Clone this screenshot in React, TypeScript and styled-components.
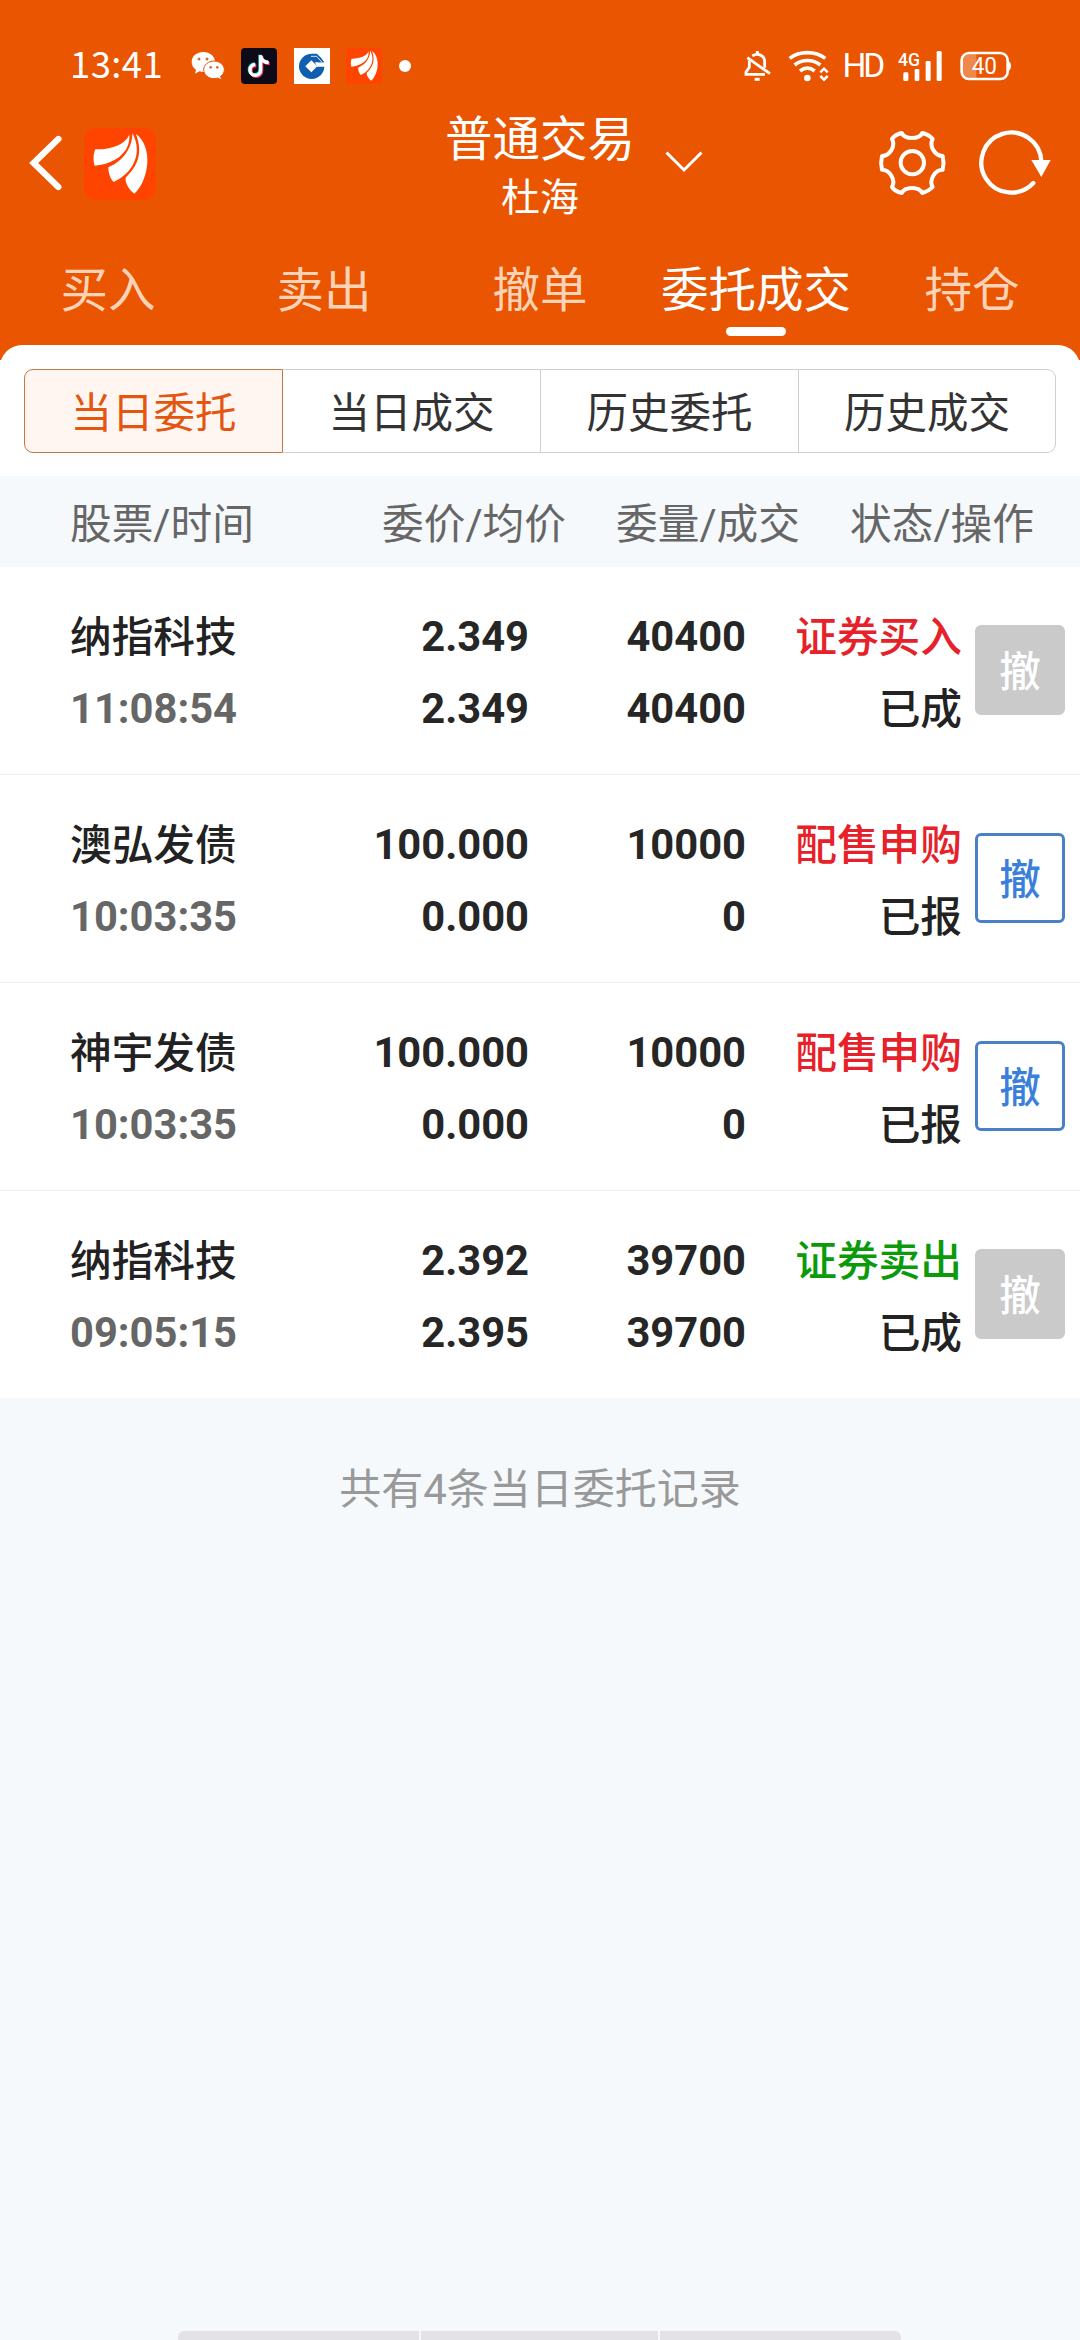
import React from "react";
import styled, { createGlobalStyle } from "styled-components";

const ORANGE = "#e95500";

const GlobalStyle = createGlobalStyle`
  * { box-sizing: border-box; }
  body {
    margin: 0;
    background: #f5f9fc;
    font-family: Roboto, "Noto Sans CJK SC", sans-serif;
  }
`;

const Screen = styled.div`
  width: 1080px;
  height: 2340px;
  display: flex;
  flex-direction: column;
  overflow: hidden;
  background: #f5f9fc;
`;

const StatusBar = styled.div`
  height: 100px;
  padding: 32px 69px 0 70px;
  display: flex;
  align-items: center;
  justify-content: space-between;
  background: ${ORANGE};
  color: #fff;
`;

const StatusGroup = styled.div<{ $gap: number }>`
  display: flex;
  align-items: center;
  gap: ${(p) => p.$gap}px;
`;

const Clock = styled.span`
  width: 104px;
  height: 46px;
  font-family: "Noto Sans CJK SC", sans-serif;
  font-weight: 400;
  font-size: 36.5px;
  line-height: 40px;
  letter-spacing: 0.4px;
`;

const AppTile = styled.div<{ $bg: string; $radius: number; $size?: number }>`
  width: ${(p) => p.$size || 36}px;
  height: ${(p) => p.$size || 36}px;
  background: ${(p) => p.$bg};
  border-radius: ${(p) => p.$radius}px;
  display: flex;
`;

const Dot = styled.span`
  width: 12px;
  height: 12px;
  border-radius: 50%;
  background: #fff;
`;

const HdLabel = styled.span`
  width: 37.6px;
  margin-left: -5px;
  font-family: Roboto, sans-serif;
  font-size: 33.5px;
  line-height: 40px;
  letter-spacing: -3px;
`;

const TitleBar = styled.header`
  height: 140px;
  display: grid;
  grid-template-columns: 360px 360px 360px;
  background: ${ORANGE};
  color: #fff;
`;

const TitleLeft = styled.div`
  display: flex;
  align-items: flex-start;
  gap: 22px;
  padding: 28px 0 0 28px;
`;

const TitleCenter = styled.div`
  position: relative;
  display: flex;
  flex-direction: column;
  align-items: center;
  padding-top: 12px;
`;

const Title = styled.h1`
  margin: 0;
  font-size: 47.5px;
  font-weight: 400;
  line-height: 56px;
`;

const Subtitle = styled.span`
  font-size: 39px;
  line-height: 60px;
`;

const Caret = styled.svg`
  position: absolute;
  left: 305px;
  top: 50px;
`;

const TitleRight = styled.div`
  display: flex;
  align-items: flex-start;
  justify-content: flex-end;
  gap: 32px;
  padding: 28px 29px 0 0;
`;

const Tabs = styled.nav`
  height: 105px;
  display: grid;
  grid-template-columns: repeat(5, 1fr);
  background: ${ORANGE};
`;

const Tab = styled.div<{ $active?: boolean }>`
  display: flex;
  flex-direction: column;
  align-items: center;
  gap: 6px;
  padding-top: 21px;
  font-size: 47.5px;
  line-height: 60px;
  white-space: nowrap;
  color: ${(p) => (p.$active ? "#fff" : "#fdd3b8")};
`;

const TabMark = styled.span`
  width: 60px;
  height: 9px;
  border-radius: 5px;
  background: #fff;
`;

const PanelEdge = styled.div`
  height: 15px;
  overflow: hidden;
  background: ${ORANGE};
`;

const PanelEdgeFill = styled.div`
  height: 40px;
  border-radius: 22px 22px 0 0;
  background: #fff;
`;

const SegmentWrap = styled.div`
  height: 116px;
  padding: 9px 24px 0;
  background: #fff;
`;

const Segments = styled.div`
  display: grid;
  grid-template-columns: 259px 258px 258px 257px;
  height: 84px;
`;

const Segment = styled.div<{ $active?: boolean }>`
  display: flex;
  align-items: center;
  justify-content: center;
  padding-bottom: 2px;
  font-size: 41.5px;
  border: 1px solid ${(p) => (p.$active ? "#c4784a" : "#cfcfcf")};
  border-left-width: ${(p) => (p.$active ? 1 : 0)}px;
  color: ${(p) => (p.$active ? "#e45510" : "#333")};
  background: ${(p) => (p.$active ? "#fff6f2" : "#fff")};
  &:first-child { border-radius: 9px 0 0 9px; }
  &:last-child { border-radius: 0 9px 9px 0; }
`;

const ColumnHead = styled.div`
  height: 91px;
  display: grid;
  grid-template-columns: 300px 196px 234px 234px;
  padding: 0 0 2px 70px;
  align-items: center;
  font-size: 41.7px;
  color: #666;
  background: #f5f9fc;
`;

const HeadCell = styled.span<{ $right?: boolean }>`
  text-align: ${(p) => (p.$right ? "right" : "left")};
`;

const Row = styled.div`
  height: 208px;
  display: grid;
  grid-template-columns: 230px 229px 217px 216px 90px;
  padding: 34px 0 0 70px;
  background: #fff;
  border-bottom: 1px solid #ececec;
  &:last-child { border-bottom: 0; height: 207px; }
`;

const Cell = styled.div<{ $right?: boolean }>`
  display: flex;
  flex-direction: column;
  align-items: ${(p) => (p.$right ? "flex-end" : "flex-start")};
`;

const Num = styled.span<{ $color?: string }>`
  font-size: 41.7px;
  line-height: 72px;
  font-weight: 700;
  color: ${(p) => p.$color || "#262626"};
`;

const Label = styled.span<{ $color?: string }>`
  height: 72px;
  padding-top: 1px;
  font-size: 41.7px;
  line-height: 72px;
  font-weight: 500;
  color: ${(p) => p.$color || "#222"};
`;

const CancelButton = styled.button<{ $enabled: boolean }>`
  width: 90px;
  height: 90px;
  margin: 24px 0 0 13px;
  padding: 6px 0 0;
  border-radius: 6px;
  border: 3px solid ${(p) => (p.$enabled ? "#4a80c8" : "#cacaca")};
  background: ${(p) => (p.$enabled ? "#fff" : "#cacaca")};
  color: ${(p) => (p.$enabled ? "#3a7fdc" : "#fff")};
  font-family: inherit;
  font-size: 41.5px;
  font-weight: 500;
  line-height: 78px;
`;

const Summary = styled.p`
  flex: 1;
  margin: 0;
  padding-top: 62px;
  text-align: center;
  font-size: 42px;
  line-height: 60px;
  color: #999;
`;

const HomeBars = styled.div`
  display: grid;
  grid-template-columns: 241px 237px 241px;
  gap: 2px;
  height: 9px;
  padding-left: 178px;
`;

const HomeBar = styled.span<{ $corner?: string }>`
  background: #e3e2e7;
  border-radius: ${(p) => p.$corner || "0"};
`;

const WeChatIcon = () => (
  <svg width="34" height="30" viewBox="420 63 102 90">
    <path d="M457 66c-20 0-35 13-35 30 0 10 5 18 13 23l-3 12 13-7c4 1 8 2 12 2 20 0 35-13 35-30s-15-30-35-30z" fill="#fff" />
    <path d="M489 93c-17 0-31 12-31 26s14 27 31 27c4 0 8-1 11-2l12 6-3-11c7-5 11-12 11-20 0-14-14-26-31-26z" fill="#fff" stroke={ORANGE} strokeWidth="3" />
    <g fill="#c9703f">
      <circle cx="444" cy="87" r="4.5" />
      <circle cx="468" cy="87" r="4.5" />
      <circle cx="479" cy="112" r="4" />
      <circle cx="499" cy="112" r="4" />
    </g>
  </svg>
);

const NOTE = "M632 76v44a16 16 0 1 1-16-16M632 77c2 12 10 20 24 21";

const DouyinIcon = () => (
  <svg width="36" height="36" viewBox="573 54 108 108" fill="none" strokeWidth="10">
    <path d={NOTE} stroke="#25d8d8" transform="translate(-2 -2)" />
    <path d={NOTE} stroke="#f0305a" transform="translate(3 3)" />
    <path d={NOTE} stroke="#fff" />
  </svg>
);

const BankIcon = () => (
  <svg width="36" height="36" viewBox="729 54 108 108">
    <circle cx="782" cy="109" r="38" fill="#0f5fae" />
    <path d="M781 91l18 18-18 18-18-18z" fill="#fff" />
    <path d="M792 97h33v13h-27z" fill="#fff" />
    <path d="M784 71h14l22 26h-18z" fill="#0f5fae" />
    <path d="M780 79h17l16 18" fill="none" stroke="#fff" strokeWidth="2.500" />
  </svg>
);

const EastLogo = ({ size }: { size: number }) => (
  <svg width={size} height={size} viewBox="252 84 216 216" fill="#fff">
    <path d="M388 104C374 134 334 149 286 148C280 160 279 182 284 197C338 192 392 162 388 104Z" />
    <path d="M397 99C398 144 368 184 325 202C325 218 330 236 341 246C394 222 432 164 397 99Z" />
    <path d="M408 102C430 162 412 198 377 233C374 248 388 270 403 281C448 240 460 140 408 102Z" />
  </svg>
);

const BellOffIcon = () => (
  <svg width="27" height="32" viewBox="70 60 81 96" fill="none" stroke="#fff" strokeWidth="8.5">
    <path d="M86 91V112L76 126V133H133" />
    <path d="M80 83L148 131" />
    <path d="M95 78C111 67 132 76 132 95V113" />
    <path d="M110 63V74" strokeWidth="9" />
    <path d="M102 148H117" strokeWidth="9" />
  </svg>
);

const WifiIcon = () => (
  <svg width="42" height="32" viewBox="206 60 126 96" fill="none" stroke="#fff" strokeWidth="11">
    <path d="M211 85C240 62 288 62 318 85" />
    <path d="M226 105C248 87 280 87 303 105" />
    <path d="M242 123C256 112 272 112 286 123" />
    <circle cx="264" cy="144" r="10" fill="#fff" stroke="none" />
    <path d="M303 127L314 116L325 127M303 138L314 149L325 138" strokeWidth="7.5" />
  </svg>
);

const SignalSvg = styled.svg`
  overflow: visible;
`;

const SignalText = styled.text`
  font-family: Roboto, sans-serif;
  font-weight: 500;
  font-size: 57px;
  fill: #fff;
`;

const SignalIcon = () => (
  <SignalSvg width="46" height="42" viewBox="532 45 138 126" fill="#fff">
    <SignalText x="535" y="108" textLength="66" lengthAdjust="spacingAndGlyphs">4G</SignalText>
    <rect x="551" y="127" width="15" height="26" rx="4" />
    <rect x="585" y="117" width="14" height="36" rx="4" />
    <rect x="618" y="93" width="15" height="60" rx="4" />
    <rect x="651" y="63" width="15" height="90" rx="4" />
  </SignalSvg>
);

const BatteryText = styled.text`
  font-family: Roboto, sans-serif;
  font-size: 70px;
  fill: #fff;
`;

const BatteryIcon = () => (
  <svg width="51" height="30" viewBox="721 63 153 90">
    <rect x="726" y="69" width="138" height="78" rx="22" fill="none" stroke="#fff" strokeWidth="8" />
    <path d="M750 73h20v70h-20a20 20 0 0 1-20-20v-30a20 20 0 0 1 20-20z" fill="#fff" opacity=".3" />
    <path d="M866 93q8 3 8 15t-8 15z" fill="#fff" />
    <BatteryText x="756" y="132" textLength="76" lengthAdjust="spacingAndGlyphs">40</BatteryText>
  </svg>
);

const BackIcon = () => (
  <svg width="34" height="72" viewBox="84 84 102 216" fill="none" stroke="#fff" strokeWidth="19" strokeLinecap="round">
    <path d="M175 117L101 189L175 261" />
  </svg>
);

const GearIcon = () => (
  <svg width="70" height="70" viewBox="406 84 210 210" fill="none" stroke="#fff" strokeWidth="12" strokeLinejoin="round">
    <path d="M480 99C490 119 532 119 542 99Q562 104 573 117C561 138 580 168 603 168Q608 188 603 209C580 209 561 240 573 261Q562 273 542 279C532 259 490 259 480 279Q460 274 451 261C463 240 444 209 421 209Q416 188 421 168C444 168 463 138 451 117Q460 104 480 99Z" />
    <circle cx="512" cy="188" r="35" />
  </svg>
);

const RefreshIcon = () => (
  <svg width="72" height="70" viewBox="715 84 216 210">
    <path d="M902 184A90 90 0 1 0 878 249" fill="none" stroke="#fff" strokeWidth="13" strokeLinecap="round" />
    <path d="M872 180H930L902 231Z" fill="#fff" />
  </svg>
);

const tabs = ["买入", "卖出", "撤单", "委托成交", "持仓"];
const segments = ["当日委托", "当日成交", "历史委托", "历史成交"];

const RED = "#e62129";
const GREEN = "#0a9a0a";

const orders = [
  { name: "纳指科技", time: "11:08:54", price: "2.349", avg: "2.349", qty: "40400", filled: "40400", side: "证券买入", color: RED, state: "已成", open: false },
  { name: "澳弘发债", time: "10:03:35", price: "100.000", avg: "0.000", qty: "10000", filled: "0", side: "配售申购", color: RED, state: "已报", open: true },
  { name: "神宇发债", time: "10:03:35", price: "100.000", avg: "0.000", qty: "10000", filled: "0", side: "配售申购", color: RED, state: "已报", open: true },
  { name: "纳指科技", time: "09:05:15", price: "2.392", avg: "2.395", qty: "39700", filled: "39700", side: "证券卖出", color: GREEN, state: "已成", open: false },
];

export default function App() {
  return (
    <Screen>
      <GlobalStyle />
      <StatusBar>
        <StatusGroup $gap={16.5}>
          <Clock>13:41</Clock>
          <WeChatIcon />
          <AppTile $bg="#0d0b18" $radius={4}><DouyinIcon /></AppTile>
          <AppTile $bg="#fff" $radius={0}><BankIcon /></AppTile>
          <AppTile $bg="#ff4400" $radius={4}><EastLogo size={36} /></AppTile>
          <Dot />
        </StatusGroup>
        <StatusGroup $gap={17}>
          <BellOffIcon />
          <WifiIcon />
          <HdLabel>HD</HdLabel>
          <SignalIcon />
          <BatteryIcon />
        </StatusGroup>
      </StatusBar>

      <TitleBar>
        <TitleLeft>
          <BackIcon />
          <AppTile $bg="#ff4400" $radius={12} $size={72}><EastLogo size={72} /></AppTile>
        </TitleLeft>
        <TitleCenter>
          <Title>普通交易</Title>
          <Subtitle>杜海</Subtitle>
          <Caret width="38" height="24" viewBox="0 0 38 24" fill="none" stroke="#fff" strokeWidth="3">
            <path d="M1.500 2.500L19 20L36.500 2.500" />
          </Caret>
        </TitleCenter>
        <TitleRight>
          <GearIcon />
          <RefreshIcon />
        </TitleRight>
      </TitleBar>

      <Tabs>
        {tabs.map((t, i) => (
          <Tab key={t} $active={i === 3}>
            {t}
            {i === 3 && <TabMark />}
          </Tab>
        ))}
      </Tabs>
      <PanelEdge><PanelEdgeFill /></PanelEdge>

      <SegmentWrap>
        <Segments>
          {segments.map((s, i) => (
            <Segment key={s} $active={i === 0}>{s}</Segment>
          ))}
        </Segments>
      </SegmentWrap>

      <ColumnHead>
        <HeadCell>股票/时间</HeadCell>
        <HeadCell $right>委价/均价</HeadCell>
        <HeadCell $right>委量/成交</HeadCell>
        <HeadCell $right>状态/操作</HeadCell>
      </ColumnHead>

      <div>
        {orders.map((o, i) => (
          <Row key={i}>
            <Cell>
              <Label>{o.name}</Label>
              <Num $color="#666">{o.time}</Num>
            </Cell>
            <Cell $right>
              <Num>{o.price}</Num>
              <Num>{o.avg}</Num>
            </Cell>
            <Cell $right>
              <Num>{o.qty}</Num>
              <Num>{o.filled}</Num>
            </Cell>
            <Cell $right>
              <Label $color={o.color}>{o.side}</Label>
              <Label>{o.state}</Label>
            </Cell>
            <CancelButton $enabled={o.open}>撤</CancelButton>
          </Row>
        ))}
      </div>

      <Summary>共有4条当日委托记录</Summary>
      <HomeBars>
        <HomeBar $corner="6px 0 0 0" />
        <HomeBar />
        <HomeBar $corner="0 6px 0 0" />
      </HomeBars>
    </Screen>
  );
}
